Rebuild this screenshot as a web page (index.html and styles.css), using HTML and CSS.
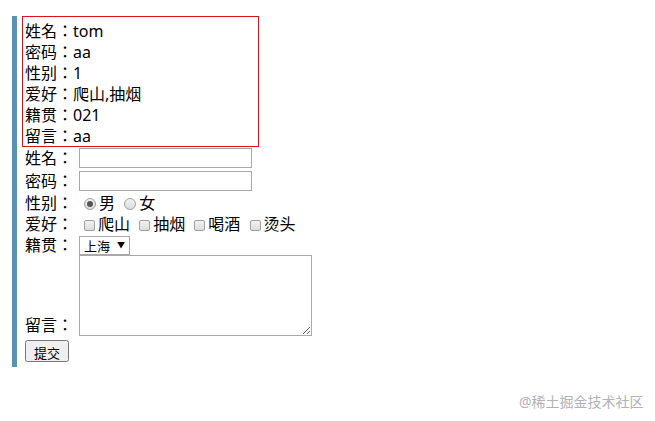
FILE: index.html
```html
<!DOCTYPE html>
<html lang="zh-CN">
<head>
    <meta charset="UTF-8">
    <title>表单</title>
    <link rel="stylesheet" href="styles.css">
</head>
<body>
    <div class="wrap">
        <div class="result">
            <p>姓名：tom</p>
            <p>密码：aa</p>
            <p>性别：1</p>
            <p>爱好：爬山,抽烟</p>
            <p>籍贯：021</p>
            <p>留言：aa</p>
        </div>
        <form class="form">
            <div class="row tall"><span class="label">姓名：</span><input type="text" class="text"></div>
            <div class="row tall"><span class="label">密码：</span><input type="password" class="text"></div>
            <div class="row"><span class="label">性别：</span><input type="radio" name="sex" class="radio" checked>男
                <input type="radio" name="sex" class="radio">女
            </div>
            <div class="row"><span class="label">爱好：</span><input type="checkbox" class="check">爬山
                <input type="checkbox" class="check">抽烟
                <input type="checkbox" class="check">喝酒
                <input type="checkbox" class="check">烫头
            </div>
            <div class="row short"><span class="label">籍贯：</span><span class="city-box">
                <select class="city">
                    <option>上海</option>
                    <option>北京</option>
                </select></span>
            </div>
            <div class="row"><span class="label">留言：</span><textarea class="msg"></textarea></div>
            <button type="button" class="submit">提交</button>
        </form>
    </div>
    <div class="mark">@稀土掘金技术社区</div>
</body>
</html>
```

FILE: styles.css
```css
body {
    margin: 0;
    font-family: "Noto Sans", "Noto Sans CJK JP", sans-serif;
    font-feature-settings: "locl" 0;
    font-size: 16px;
    color: #000;
    background: #fff;
}

.wrap {
    margin: 16px 0 0 12px;
    border-left: 5px solid #5a91b4;
    padding-left: 5px;
    padding-bottom: 4px;
    width: 320px;
}

.result {
    width: 233px;
    height: 125px;
    border: 1px solid #d9141c;
    padding: 4px 0 0 2px;
}

.result p {
    margin: 0;
    line-height: 21px;
}

.form {
    margin: 0;
    padding-left: 3px;
}

.row {
    line-height: 21px;
}

.row.tall {
    line-height: 23px;
}

.row.short {
    display: flex;
    height: 20px;
    line-height: 20px;
}

.label {
    display: inline-block;
    width: 54px;
}

.text {
    box-sizing: border-box;
    width: 173px;
    height: 20px;
    margin: 1px 0 0;
    border: 1px solid #a9a9a9;
    font-size: 13px;
    vertical-align: top;
}

.radio,
.check {
    appearance: none;
    -webkit-appearance: none;
    box-sizing: border-box;
    width: 12px;
    height: 12px;
    margin: 0 3px 0 5px;
    border: 1px solid #a0a0a0;
    background: linear-gradient(#f2f2f2, #dcdcdc);
    vertical-align: -1px;
    position: relative;
}

.radio {
    border-radius: 50%;
}

.radio:checked::after {
    content: "";
    position: absolute;
    left: 2px;
    top: 2px;
    width: 6px;
    height: 6px;
    border-radius: 50%;
    background: #555;
}

.check {
    border-radius: 2px;
    width: 11px;
    height: 11px;
}

.city-box {
    position: relative;
    margin-top: 1px;
    height: 19px;
}

.city-box::after {
    content: "▼";
    position: absolute;
    right: 5px;
    top: 3px;
    font-size: 8px;
    line-height: 12px;
    pointer-events: none;
}

.city {
    appearance: none;
    -webkit-appearance: none;
    box-sizing: border-box;
    width: 51px;
    height: 19px;
    padding: 0 0 0 4px;
    border: 1px solid #a9a9a9;
    border-radius: 0;
    background: #fff;
    font-size: 13px;
    font-family: "Noto Sans CJK JP", sans-serif;
    line-height: 17px;
    color: #000;
    display: block;
}

.msg {
    box-sizing: border-box;
    width: 233px;
    height: 81px;
    border: 1px solid #a9a9a9;
    vertical-align: bottom;
    margin: 0;
}

.submit {
    margin-top: 4px;
    font-size: 13px;
    font-family: "Noto Sans CJK JP", sans-serif;
    padding: 1px 7px;
    height: 22px;
}

.mark {
    position: absolute;
    left: 519px;
    top: 391px;
    font-size: 14px;
    color: #b0b3b8;
}
```
